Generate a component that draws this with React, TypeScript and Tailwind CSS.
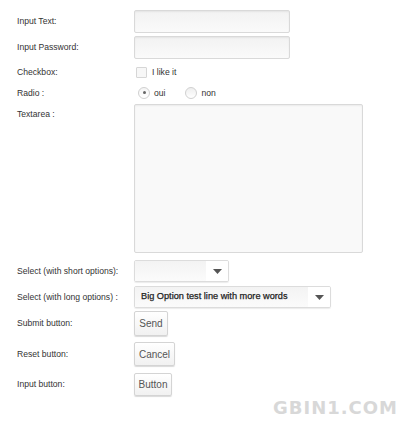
import React from 'react';

const labelCls = "w-[117px] shrink-0 text-[8.6px] text-[#333]";
const fieldCls =
  "rounded-[2px] border border-[#d9d9d9] bg-gradient-to-b from-[#f2f2f2] to-[#fafafa] shadow-[inset_0_1px_2px_rgba(0,0,0,0.06)]";
const btnCls =
  "rounded-[2px] border border-[#d4d4d4] bg-gradient-to-b from-white to-[#f1f1f1] shadow-[0_1px_1px_rgba(0,0,0,0.15)] text-[10px] text-[#555] flex items-center justify-center";

const Arrow = () => (
  <svg width="9" height="5" viewBox="0 0 9 5">
    <path d="M0 0h9L4.5 5z" fill="#555" />
  </svg>
);

const App: React.FC = () => {
  return (
    <div
      className="w-[400px] h-[424px] bg-white pl-[17px] pt-[10px] overflow-hidden"
      style={{ fontFamily: '"Liberation Sans", Arial, sans-serif' }}
    >
      {/* Input Text */}
      <div className="flex items-center h-[23px]">
        <span className={labelCls}>Input Text:</span>
        <div className={`${fieldCls} w-[156px] h-[23px]`} />
      </div>

      {/* Input Password */}
      <div className="flex items-center h-[23px] mt-[3px]">
        <span className={labelCls}>Input Password:</span>
        <div className={`${fieldCls} w-[156px] h-[23px]`} />
      </div>

      {/* Checkbox */}
      <div className="flex items-center h-[23px] mt-[2px]">
        <span className={labelCls}>Checkbox:</span>
        <div className="flex items-center pl-[2px]">
          <div className="w-[11px] h-[11px] rounded-[1px] border border-[#d6d6d6] bg-[#f7f7f7]" />
          <span className="ml-[5px] text-[8.6px] text-[#333]">I like it</span>
        </div>
      </div>

      {/* Radio */}
      <div className="flex items-center h-[18px]">
        <span className={labelCls}>Radio :</span>
        <div className="flex items-center pl-[4px]">
          <div className="w-[12px] h-[12px] rounded-full border border-[#d0d0d0] bg-gradient-to-b from-[#f5f5f5] to-white flex items-center justify-center">
            <div className="w-[3px] h-[3px] rounded-full bg-[#666]" />
          </div>
          <span className="ml-[4px] text-[8.6px] text-[#333]">oui</span>
          <div className="ml-[20px] w-[12px] h-[12px] rounded-full border border-[#d0d0d0] bg-gradient-to-b from-[#eee] to-white" />
          <span className="ml-[4px] text-[8.6px] text-[#333]">non</span>
        </div>
      </div>

      {/* Textarea */}
      <div className="flex items-start mt-[2px]">
        <span className={`${labelCls} pt-[4px]`}>Textarea :</span>
        <div className="w-[229px] h-[149px] rounded-[2px] border border-[#d9d9d9] bg-[#f9f9f9] shadow-[inset_0_1px_2px_rgba(0,0,0,0.06)]" />
      </div>

      {/* Select short */}
      <div className="flex items-center h-[22px] mt-[7px]">
        <span className={labelCls}>Select (with short options):</span>
        <div className="w-[95px] h-[22px] flex rounded-[2px] border border-[#dcdcdc] shadow-[0_1px_1px_rgba(0,0,0,0.08)] overflow-hidden">
          <div className="flex-1 bg-gradient-to-b from-[#f3f3f3] to-[#fbfbfb]" />
          <div className="w-[22px] bg-white flex items-center justify-center">
            <Arrow />
          </div>
        </div>
      </div>

      {/* Select long */}
      <div className="flex items-center h-[22px] mt-[4px]">
        <span className={labelCls}>Select (with long options) :</span>
        <div className="w-[197px] h-[22px] flex rounded-[2px] border border-[#dcdcdc] shadow-[0_1px_1px_rgba(0,0,0,0.08)] overflow-hidden">
          <div className="flex-1 bg-gradient-to-b from-[#f3f3f3] to-[#fbfbfb] flex items-center pl-[6px] text-[9.2px] text-[#222] [-webkit-text-stroke:0.25px_#222]">
            Big Option test line with more words
          </div>
          <div className="w-[22px] bg-white flex items-center justify-center">
            <Arrow />
          </div>
        </div>
      </div>

      {/* Submit */}
      <div className="flex items-center h-[25px] mt-[3px]">
        <span className={labelCls}>Submit button:</span>
        <div className={`${btnCls} w-[34px] h-[25px]`}>Send</div>
      </div>

      {/* Reset */}
      <div className="flex items-center h-[24px] mt-[6px]">
        <span className={labelCls}>Reset button:</span>
        <div className={`${btnCls} w-[41px] h-[24px]`}>Cancel</div>
      </div>

      {/* Input button */}
      <div className="flex items-center h-[23px] mt-[7px]">
        <span className={labelCls}>Input button:</span>
        <div className={`${btnCls} w-[38px] h-[23px]`}>Button</div>
      </div>

      {/* Watermark */}
      <div className="flex justify-end pr-[2px] mt-[5px]">
        <span
          className="text-[18px] font-bold leading-[14px] text-[#d8d8d8] tracking-[1px]"
          style={{ fontFamily: '"DejaVu Sans", sans-serif' }}
        >
          GBIN1.COM
        </span>
      </div>
    </div>
  );
};

export default App;
